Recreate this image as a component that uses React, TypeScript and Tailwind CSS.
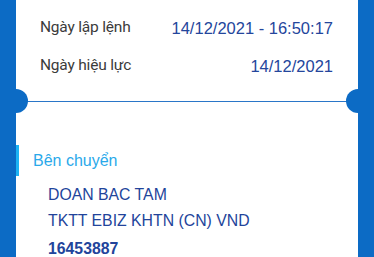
import React from "react";

const rows = [
  { label: "Ngày lập lệnh", value: "14/12/2021 - 16:50:17" },
  { label: "Ngày hiệu lực", value: "14/12/2021" },
];

const sender = ["DOAN BAC TAM", "TKTT EBIZ KHTN (CN) VND"];

const App = () => {
  return (
    <div className="flex h-[257px] w-full overflow-hidden bg-[#0c6bc5]">
      {/* left rail */}
      <div className="w-4 shrink-0 bg-[#0c6bc5]"></div>
      {/* card */}
      <div className="flex flex-1 flex-col overflow-hidden bg-white pt-[9px]">
        {rows.map(({ label, value }) => (
          <div
            key={label}
            className="flex h-[38px] shrink-0 items-center justify-between pl-6 pr-[25px]"
          >
            <span className="font-['Roboto',sans-serif] text-[15.5px] tracking-[-0.2px] text-[#3b3b3b]">
              {label}
            </span>
            <span className="font-['Liberation_Sans',Arial,sans-serif] text-[16.5px] text-[#24469c]">
              {value}
            </span>
          </div>
        ))}
        {/* ticket divider */}
        <div className="relative flex h-[32px] shrink-0 items-center">
          <div className="absolute left-[-12px] top-[4px] h-6 w-6 rounded-full bg-[#0c6bc5]"></div>
          <div className="mx-[11px] h-px flex-1 bg-[#2a76c8]"></div>
          <div className="absolute right-[-12px] top-[4px] h-6 w-6 rounded-full bg-[#0c6bc5]"></div>
        </div>
        {/* sender */}
        <div className="mt-[28px] flex h-[31px] shrink-0 items-center border-l-[3px] border-[#1db3f3] pl-[14px]">
          <span className="font-['Liberation_Sans',Arial,sans-serif] text-[16px] text-[#2aa9ea]">
            Bên chuyển
          </span>
        </div>
        <div className="mt-[6px] flex shrink-0 flex-col pl-8 font-['Liberation_Sans',Arial,sans-serif] text-[15.8px] text-[#22449b]">
          {sender.map((s) => (
            <span key={s} className="flex h-[26px] items-center">
              {s}
            </span>
          ))}
          <span className="mt-[2px] flex h-[26px] items-center font-bold">16453887</span>
        </div>
      </div>
      {/* right rail */}
      <div className="w-4 shrink-0 bg-[#0c6bc5]"></div>
    </div>
  );
};

export default App;
